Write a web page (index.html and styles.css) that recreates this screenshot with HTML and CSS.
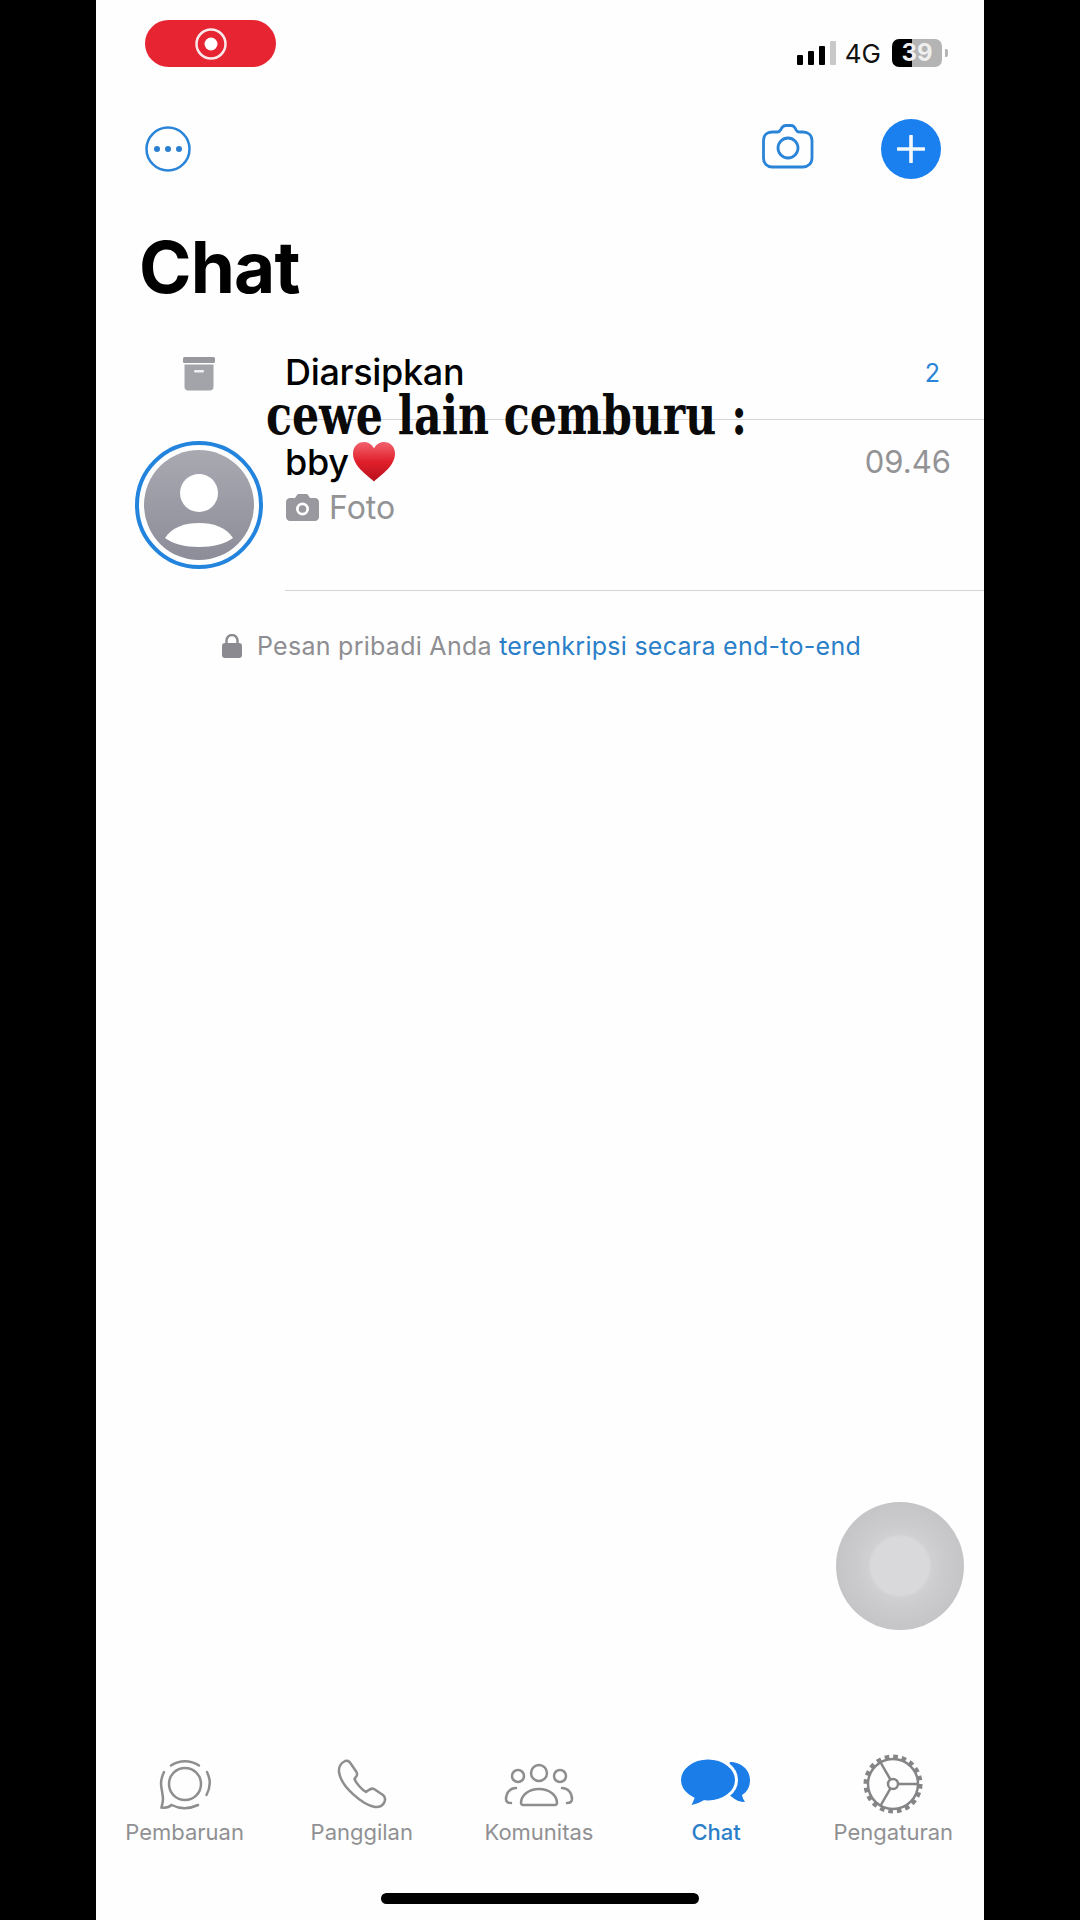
FILE: index.html
```html
<!DOCTYPE html>
<html lang="id">
<head>
    <meta charset="UTF-8">
    <meta name="viewport" content="width=device-width, initial-scale=1.0">
    <title>Chat</title>
    <link rel="stylesheet" href="styles.css">
</head>
<body>

<div class="phone">

    <div class="status-bar">
        <div class="record-pill">
            <svg width="32" height="32" viewBox="0 0 32 32">
                <circle cx="16" cy="16" r="14.5" fill="none" stroke="#fbe9ea" stroke-width="2.5"/>
                <circle cx="16" cy="16" r="6.5" fill="#fff"/>
            </svg>
        </div>
        <div class="status-right">
            <div class="signal">
                <span class="bar bar-1"></span>
                <span class="bar bar-2"></span>
                <span class="bar bar-3"></span>
                <span class="bar bar-4"></span>
            </div>
            <span class="network">4G</span>
            <div class="battery">39</div>
            <span class="battery-nub"></span>
        </div>
    </div>

    <div class="toolbar">
        <svg class="more-icon" width="46" height="46" viewBox="0 0 46 46">
            <circle cx="23" cy="23" r="21.500" fill="none" stroke="#2a84d8" stroke-width="2.5"/>
            <circle cx="12" cy="23" r="3" fill="#2a7fd0"/>
            <circle cx="23" cy="23" r="3" fill="#2a7fd0"/>
            <circle cx="34" cy="23" r="3" fill="#2a7fd0"/>
        </svg>
        <div class="toolbar-right">
            <svg class="camera-icon" width="52" height="46" viewBox="0 0 52 46">
                <path d="M10 9h5.500c1.500 0 2.400-.8 3.200-2.200C20 4 21.500 2.500 24 2.500h5c2.500 0 3.800 1.500 5 4.300.7 1.400 1.700 2.200 3.200 2.200H41c5 0 9 3 9 8.500V35c0 5.500-4 9-9 9H10c-5 0-8.500-3.500-8.500-9V17.500C1.500 12 5 9 10 9z" fill="none" stroke="#2a84d8" stroke-width="2.8"/>
                <circle cx="26" cy="25" r="10" fill="none" stroke="#2a84d8" stroke-width="2.8"/>
            </svg>
            <div class="plus-btn">
                <svg width="28" height="28" viewBox="0 0 28 28">
                    <path d="M14 1v26M1 14h26" stroke="#f4f8fd" stroke-width="3.600" stroke-linecap="round"/>
                </svg>
            </div>
        </div>
    </div>

    <h1 class="title">Chat</h1>

    <div class="row row-archive">
        <div class="row-lead">
            <svg class="archive-icon" width="32" height="34" viewBox="0 0 32 34">
                <rect x="0" y="0" width="32" height="6" rx="1.500" fill="#98989f"/>
                <path d="M1.500 7.500h29V30c0 2.200-1.500 3.500-3.500 3.500H5c-2 0-3.500-1.300-3.500-3.500z" fill="#a3a3aa"/>
                <rect x="11" y="13" width="10" height="2.500" rx="1.200" fill="#efeff1"/>
            </svg>
        </div>
        <div class="row-body archive-body">
            <span class="row-name">Diarsipkan</span>
            <span class="archive-count">2</span>
        </div>
    </div>

    <div class="row row-chat">
        <div class="row-lead">
            <div class="avatar-ring">
                <svg width="110" height="110" viewBox="0 0 110 110">
                    <defs>
                        <linearGradient id="avatarFill" x1="0" y1="0" x2="0" y2="1">
                            <stop offset="0" stop-color="#a9a9b2"/>
                            <stop offset="1" stop-color="#8d8d99"/>
                        </linearGradient>
                    </defs>
                    <circle cx="55" cy="55" r="55" fill="url(#avatarFill)"/>
                    <circle cx="55" cy="43" r="19" fill="#fff"/>
                    <path d="M21 88C28 77 41 73 55 73s27 4 34 15c-8 6-20 9-34 9s-26-3-34-9z" fill="#fff"/>
                </svg>
            </div>
        </div>
        <div class="row-body chat-body">
            <div class="chat-top">
                <span class="row-name chat-name">bby
                    <svg class="heart" width="44" height="41" viewBox="0 0 44 41">
                        <defs>
                            <linearGradient id="heartFill" x1="0" y1="0" x2="0" y2="1">
                                <stop offset="0" stop-color="#f2626e"/>
                                <stop offset="0.5" stop-color="#e0202c"/>
                                <stop offset="1" stop-color="#b8101c"/>
                            </linearGradient>
                        </defs>
                        <path d="M22 40.500C14 33 1 25 1 12.500 1 5.500 6 1 12 1c4.500 0 8 2.500 10 6.500C24 3.500 27.500 1 32 1c6 0 11 4.500 11 11.500C43 25 30 33 22 40.500z" fill="url(#heartFill)"/>
                    </svg>
                </span>
                <span class="chat-time">09.46</span>
            </div>
            <div class="chat-preview">
                <svg width="33" height="27" viewBox="0 0 33 27">
                    <path d="M4 4h5l2-3c.5-.6 1-1 2-1h7c1 0 1.500.4 2 1l2 3h5c2.200 0 4 1.800 4 4v15c0 2.200-1.800 4-4 4H4c-2.200 0-4-1.800-4-4V8c0-2.200 1.800-4 4-4z" fill="#98989e"/>
                    <circle cx="16.500" cy="15" r="6.500" fill="#fff"/>
                    <circle cx="16.500" cy="15" r="3.800" fill="#98989e"/>
                </svg>
                <span>Foto</span>
            </div>
        </div>
    </div>

    <div class="notice">
        <svg width="20" height="24" viewBox="0 0 20 24">
            <path d="M4.500 10V6.500a5.500 5.500 0 0 1 11 0V10" fill="none" stroke="#8a8a90" stroke-width="2.400"/>
            <rect x="0" y="9" width="20" height="15" rx="3" fill="#8a8a90"/>
        </svg>
        <span>Pesan pribadi Anda <span class="notice-link">terenkripsi secara end-to-end</span></span>
    </div>

    <div class="spacer"></div>

    <nav class="tabs">
        <div class="tab">
            <svg width="60" height="60" viewBox="0 0 60 60" fill="none" stroke="#8e8e90" stroke-width="2.500" stroke-linecap="round">
                <circle cx="30" cy="30" r="16"/>
                <path d="M16 11.500A25 25 0 0 1 44 11.500"/>
                <path d="M52 18A25 25 0 0 1 51.500 41"/>
                <path d="M9 18C6.500 23 5.500 29 6.500 34c.6 4 1.500 8 1.500 11 0 3-1 6-1.500 8.500 4 .5 8-.5 10-2.500 8 4 18 4 26.500 0"/>
            </svg>
            <span>Pembaruan</span>
        </div>
        <div class="tab">
            <svg width="60" height="60" viewBox="-5 -5 60 60" fill="none" stroke="#8e8e90" stroke-width="2.500" stroke-linejoin="round">
                <path d="M8 2C11 1 13 3 14 5l5.500 8c1 2 .5 4-1 5.500l-1 1.500c1.500 4 7.500 11 11.500 13l2-1.500c2-1.500 4-2.500 6-1.500l9 6c2.500 2 2.500 5 1 8-2 3-5 4.500-9 4C26 46 4 28 2 13 1.500 8 4 4 8 2z"/>
            </svg>
            <span>Panggilan</span>
        </div>
        <div class="tab">
            <svg width="72" height="60" viewBox="0 0 72 60" fill="none" stroke="#8e8e90" stroke-width="2.500" stroke-linecap="round">
                <circle cx="36" cy="19" r="8"/>
                <circle cx="15" cy="22" r="6"/>
                <circle cx="57" cy="22" r="6"/>
                <path d="M18 49c0-8 8-14 18-14s18 6 18 14c0 1-1 2-2 2H20c-1 0-2-1-2-2z"/>
                <path d="M13 34c-6 0-10 5-10 11 0 2 1.500 4 5 4"/>
                <path d="M59 34c6 0 10 5 10 11 0 2-1.500 4-5 4"/>
            </svg>
            <span>Komunitas</span>
        </div>
        <div class="tab tab-active">
            <svg width="72" height="60" viewBox="0 0 72 60">
                <path d="M50 8c10 0 20 7 20 18 0 7-3 12-8 15 .5 3 2 5 3 7-5 0-10-2-13-5l-12-8z" fill="#1a7de8"/>
                <ellipse cx="28" cy="26" rx="28.500" ry="22" fill="#1a7de8" stroke="#fefefe" stroke-width="3"/>
                <path d="M15 42c-.5 3-2 6-3.500 9 5-1 10-3 14-6z" fill="#1a7de8"/>
            </svg>
            <span>Chat</span>
        </div>
        <div class="tab">
            <svg width="60" height="60" viewBox="0 0 60 60" fill="none" stroke="#858587">
                <circle cx="30" cy="30" r="25" stroke-width="2.500"/>
                <circle cx="30" cy="30" r="27.500" stroke-width="4" stroke-dasharray="4.640 4"/>
                <circle cx="30" cy="30" r="5" stroke-width="2.500"/>
                <path d="M35 30h20M27.500 25.700L17 7.500M27.500 34.300L17 52.500" stroke-width="2.500"/>
            </svg>
            <span>Pengaturan</span>
        </div>
    </nav>

    <div class="home-bar"></div>

    <!-- things lying over the list -->
    <div class="caption">cewe lain cemburu :</div>
    <div class="touch-btn"></div>
</div>

</body>
</html>
```

FILE: styles.css
```css
body {
    font-family: Inter, "Liberation Sans", sans-serif;
    background-color: #000;
    margin: 0;
    padding: 0;
    overflow: hidden;
}
svg {
    display: block;
    flex: none;
}
.phone {
    position: relative;
    width: 888px;
    height: 1920px;
    margin-left: 96px;
    background-color: #fefefe;
    display: flex;
    flex-direction: column;
}
.status-bar {
    height: 96px;
    box-sizing: border-box;
    padding: 20px 36px 0 49px;
    display: flex;
    justify-content: space-between;
    align-items: flex-start;
}
.record-pill {
    width: 131px;
    height: 47px;
    border-radius: 24px;
    background-color: #e62432;
    display: flex;
    align-items: center;
    justify-content: center;
}
.status-right {
    margin-top: 19px;
    height: 28px;
    display: flex;
    align-items: center;
}
.signal {
    display: flex;
    align-items: flex-end;
    gap: 5px;
    height: 24px;
}
.bar {
    width: 6px;
    background-color: #000;
    border-radius: 1px;
}
.bar-1 { height: 10px; }
.bar-2 { height: 14px; }
.bar-3 { height: 19px; }
.bar-4 { height: 24px; background-color: #c8c8c8; }
.network {
    margin-left: 9px;
    font-size: 26px;
    color: #111;
}
.battery {
    margin-left: 11px;
    width: 50px;
    height: 28px;
    line-height: 28px;
    border-radius: 7px;
    background: linear-gradient(90deg, #000 40%, #b4b4b4 40%);
    color: #efefef;
    font-size: 24px;
    font-weight: 700;
    text-align: center;
}
.battery-nub {
    margin-left: 3px;
    width: 3px;
    height: 8px;
    border-radius: 0 2px 2px 0;
    background-color: #b4b4b4;
}
.toolbar {
    height: 60px;
    margin-top: 23px;
    padding: 0 43px 0 49px;
    display: flex;
    justify-content: space-between;
    align-items: center;
}
.toolbar-right {
    display: flex;
    align-items: center;
    gap: 67px;
}
.camera-icon {
    margin-bottom: 6px;
}
.plus-btn {
    width: 60px;
    height: 60px;
    border-radius: 50%;
    background-color: #1a80f0;
    display: flex;
    align-items: center;
    justify-content: center;
}
.title {
    margin: 46px 0 0 43px;
    height: 81px;
    line-height: 84px;
    font-size: 71px;
    font-weight: 700;
    letter-spacing: -0.8px;
    color: #000;
}
.row {
    display: flex;
    padding-left: 39px;
}
.row-lead {
    width: 128px;
    margin-right: 22px;
    display: flex;
    justify-content: center;
    align-items: flex-start;
    flex: none;
}
.row-body {
    flex: 1;
    border-bottom: 1px solid #d4d4d6;
}
.row-name {
    font-size: 36px;
    line-height: 40px;
    font-weight: 500;
    letter-spacing: -0.3px;
    color: #000;
}
.row-archive {
    margin-top: 35px;
    height: 68px;
    padding-top: 11px;
}
.archive-icon {
    margin-top: 5px;
}
.archive-body {
    display: flex;
    justify-content: space-between;
    padding-right: 44px;
}
.archive-count {
    margin-top: 6px;
    font-size: 25px;
    color: #2a84d8;
}
.row-chat {
    height: 171px;
}
.row-chat .row-lead {
    padding-top: 21px;
}
.avatar-ring {
    width: 128px;
    height: 128px;
    box-sizing: border-box;
    border: 4px solid #2384de;
    border-radius: 50%;
    display: flex;
    align-items: center;
    justify-content: center;
}
.chat-body {
    padding: 21px 33px 0 0;
}
.chat-top {
    display: flex;
    justify-content: space-between;
    align-items: center;
}
.chat-name {
    display: flex;
    align-items: center;
    gap: 3px;
}
.chat-time {
    font-size: 31px;
    color: #939396;
}
.chat-preview {
    margin-top: 6px;
    margin-left: 1px;
    display: flex;
    align-items: center;
    gap: 10px;
    font-size: 32px;
    color: #939396;
}
.notice {
    margin-top: 40px;
    padding-left: 126px;
    display: flex;
    align-items: center;
    gap: 15px;
    font-size: 25px;
    letter-spacing: 0.27px;
    color: #8e8e92;
}
.notice-link {
    color: #2a7fc8;
}
.spacer {
    flex: 1;
}
.tabs {
    display: grid;
    grid-template-columns: repeat(5, 177.200px);
}
.tab {
    display: flex;
    flex-direction: column;
    align-items: center;
    gap: 5px;
    font-size: 22px;
    color: #909093;
}
.tab-active {
    font-weight: 500;
    color: #2a7fc8;
}
.home-bar {
    width: 318px;
    height: 11px;
    margin: 48px auto 16px;
    border-radius: 6px;
    background-color: #000;
}
.caption {
    position: absolute;
    left: 170px;
    top: 383px;
    font-family: "DejaVu Serif", serif;
    font-size: 54px;
    font-weight: 700;
    color: #0a0a0a;
    white-space: nowrap;
    transform: scaleX(0.79);
    transform-origin: left center;
}
.touch-btn {
    position: absolute;
    left: 740px;
    top: 1502px;
    width: 128px;
    height: 128px;
    border-radius: 50%;
    background: radial-gradient(circle closest-side, #d9d9db 0, #d9d9db 45%, #d0d0d2 50%, #cbcbcd 68%, #c5c5c7 100%);
}
```
